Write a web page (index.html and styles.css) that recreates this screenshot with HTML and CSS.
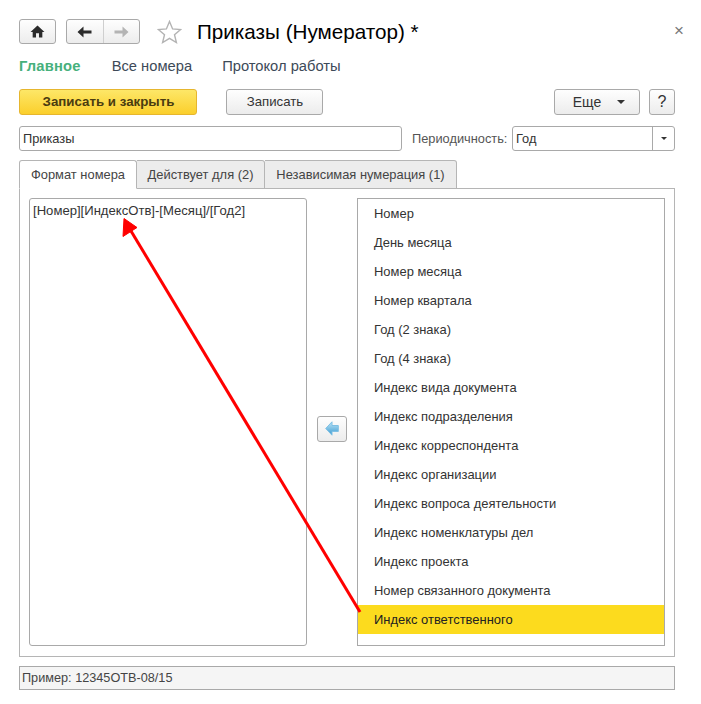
FILE: index.html
```html
<!DOCTYPE html>
<html lang="ru">
<head>
<meta charset="utf-8">
<title>Приказы (Нумератор)</title>
<link rel="stylesheet" href="styles.css">
</head>
<body>
<div class="window">
  <header class="titlebar">
    <button class="btn icon-btn home"><svg width="15" height="13" viewBox="0 0 16 14"><path d="M8 0.5 L15.5 7.5 H13.2 V13.5 H9.6 V9 H6.4 V13.5 H2.8 V7.5 H0.5 Z" fill="#2b2b2b"/></svg></button>
    <div class="btn history">
      <span class="hist-part"><svg width="15" height="12" viewBox="0 0 15 12"><path d="M0.5 6 L6.5 0.5 V4.5 H14.5 V7.5 H6.5 V11.5 Z" fill="#2b2b2b"/></svg></span>
      <span class="hist-part hist-off"><svg width="15" height="12" viewBox="0 0 15 12"><path d="M14.5 6 L8.5 0.5 V4.5 H0.5 V7.5 H8.5 V11.5 Z" fill="#b4b4b4"/></svg></span>
    </div>
    <svg class="star" width="25" height="24" viewBox="0 0 25 24"><path d="M12.5 1.5 L15.6 8.9 L23.6 9.5 L17.5 14.7 L19.4 22.5 L12.5 18.3 L5.6 22.5 L7.5 14.7 L1.4 9.5 L9.4 8.9 Z" fill="#fff" stroke="#b3b3b3" stroke-width="1.4"/></svg>
    <h1 class="title">Приказы (Нумератор) *</h1>
    <span class="close">×</span>
  </header>

  <nav class="sections">
    <a class="section active">Главное</a>
    <a class="section">Все номера</a>
    <a class="section">Протокол работы</a>
  </nav>

  <div class="toolbar">
    <button class="btn primary">Записать и закрыть</button>
    <button class="btn save">Записать</button>
    <div class="spacer"></div>
    <button class="btn more">Еще<i class="caret"></i></button>
    <button class="btn help">?</button>
  </div>

  <div class="fields">
    <div class="field name">Приказы</div>
    <label class="field-label">Периодичность:</label>
    <div class="field select"><span class="select-value">Год</span><span class="select-btn"><i class="caret small"></i></span></div>
  </div>

  <div class="tabs">
    <div class="tab current">Формат номера</div>
    <div class="tab t2">Действует для (2)</div>
    <div class="tab t3">Независимая нумерация (1)</div>
  </div>

  <section class="panel">
    <div class="format">[Номер][ИндексОтв]-[Месяц]/[Год2]</div>
    <div class="middle">
      <button class="btn move"><svg width="14" height="15" viewBox="0 0 14 15"><defs><linearGradient id="mv" x1="0" y1="0" x2="0" y2="1"><stop offset="0" stop-color="#bfe6f8"/><stop offset="1" stop-color="#3a9ad0"/></linearGradient></defs><path d="M0.7 7.5 L7 0.8 V4.5 H13.3 V10.5 H7 V14.2 Z" fill="url(#mv)" stroke="#7fc0e4" stroke-width="1"/></svg></button>
    </div>
    <ul class="list">
      <li>Номер</li>
      <li>День месяца</li>
      <li>Номер месяца</li>
      <li>Номер квартала</li>
      <li>Год (2 знака)</li>
      <li>Год (4 знака)</li>
      <li>Индекс вида документа</li>
      <li>Индекс подразделения</li>
      <li>Индекс корреспондента</li>
      <li>Индекс организации</li>
      <li>Индекс вопроса деятельности</li>
      <li>Индекс номенклатуры дел</li>
      <li>Индекс проекта</li>
      <li>Номер связанного документа</li>
      <li class="selected">Индекс ответственного</li>
    </ul>
  </section>

  <div class="example">Пример: 12345ОТВ-08/15</div>
</div>

<svg class="annotation" width="701" height="704" viewBox="0 0 701 704">
  <line x1="360" y1="612" x2="131" y2="231" stroke="#ff0000" stroke-width="3"/>
  <path d="M124 218.5 L137 227.5 L123 236.5 Z" fill="#ff0000" stroke="#ff0000" stroke-width="1"/>
</svg>
</body>
</html>
```
FILE: styles.css
```css
* { box-sizing: border-box; }
html, body { margin: 0; padding: 0; background: #fff; }
body { position: relative; width: 701px; height: 704px; overflow: hidden; font: 13px/14px "Liberation Sans", Arial, sans-serif; color: #333; }
.window { padding: 19px 26px 0 19px; }

.btn {
  display: inline-flex; align-items: center; justify-content: center;
  margin: 0; padding: 0; height: 26px;
  border: 1px solid #a9a9a9; border-radius: 3px;
  background: linear-gradient(#fefefe, #ececec);
  font: inherit; font-size: 13.2px; color: #333;
}

.titlebar { display: flex; align-items: center; height: 25px; position: relative; }
.icon-btn.home { width: 37px; height: 25px; }
.history { width: 74px; height: 25px; margin-left: 10px; padding: 0; align-items: stretch; }
.hist-part { flex: 1; display: flex; align-items: center; justify-content: center; }
.hist-off { border-left: 1px solid #cfcfcf; }
.star { margin-left: 17px; flex: none; }
.title { margin: 0 0 0 15px; font-size: 20.67px; line-height: 25px; font-weight: 400; color: #000; }
.close { position: absolute; right: -9px; top: 3px; font-size: 17px; line-height: 18px; color: #777; }

.sections { display: flex; height: 21px; margin-top: 11px; align-items: center; font-size: 14.72px; }
.section { color: #3d4a58; margin-right: 30px; }
.section.active { color: #46b07c; font-weight: 700; letter-spacing: 0.2px; margin-right: 31px; }

.toolbar { display: flex; margin-top: 13px; }
.primary { width: 178px; border-color: #e6b62e; background: linear-gradient(#fde768, #fbcf2c); font-weight: 700; color: #4a3c10; font-size: 13.3px; padding-left: 1px; }
.save { width: 97px; margin-left: 29px; padding-left: 1px; }
.spacer { flex: 1; }
.more { width: 86px; position: relative; padding-right: 20px; font-size: 14px; }
.help { width: 26px; margin-left: 9px; font-size: 16px; }
.caret { position: absolute; right: 14px; top: 10px; width: 0; height: 0; border-left: 4px solid transparent; border-right: 4px solid transparent; border-top: 4px solid #333; }
.caret.small { position: static; display: block; border-left-width: 3px; border-right-width: 3px; border-top-width: 3px; }

.fields { display: flex; align-items: center; margin-top: 11px; height: 25px; }
.field { height: 25px; border: 1px solid #a9a9a9; border-radius: 3px; background: #fff; display: flex; align-items: center; font-size: 12.8px; }
.name { width: 383px; padding-left: 3px; }
.field-label { margin-left: 10px; width: 100px; color: #555; font-size: 12.8px; }
.select { width: 163px; padding-left: 3px; justify-content: space-between; }
.select-btn { width: 22px; height: 23px; border-left: 1px solid #a9a9a9; display: flex; align-items: center; justify-content: center; }

.tabs { display: flex; margin-top: 9px; height: 28px; position: relative; z-index: 1; }
.tab { height: 29px; padding-top: 7px; text-align: center; border: 1px solid #b5b5b5; border-left: 0; border-radius: 0 3px 0 0; background: #ececec; font-size: 12.9px; color: #444; }
.tab.current { width: 118px; border-left: 1px solid #b5b5b5; border-radius: 3px 3px 0 0; border-bottom-color: #fff; background: #fff; }
.tab.t2 { width: 128px; }
.tab.t3 { width: 192px; }

.panel { display: flex; height: 469px; padding: 9px; border: 1px solid #b5b5b5; }
.format { width: 278px; height: 448px; padding: 4px 3px; border: 1px solid #a9a9a9; border-radius: 3px; font-size: 13.1px; line-height: 16px; }
.middle { width: 50px; display: flex; align-items: center; justify-content: center; padding-top: 12px; }
.move { width: 30px; }
.list { width: 308px; height: 448px; margin: 0; padding: 0; list-style: none; border: 1px solid #a9a9a9; }
.list li { height: 29px; padding-left: 16px; line-height: 29px; font-size: 12.95px; color: #333; }
.list li.selected { background: #fcdb1e; color: #222; }

.example { height: 24px; margin-top: 9px; padding-left: 2px; border: 1px solid #a9a9a9; background: #f5f5f5; line-height: 22px; font-size: 12.7px; color: #444; }

.annotation { position: absolute; left: 0; top: 0; pointer-events: none; }
```
